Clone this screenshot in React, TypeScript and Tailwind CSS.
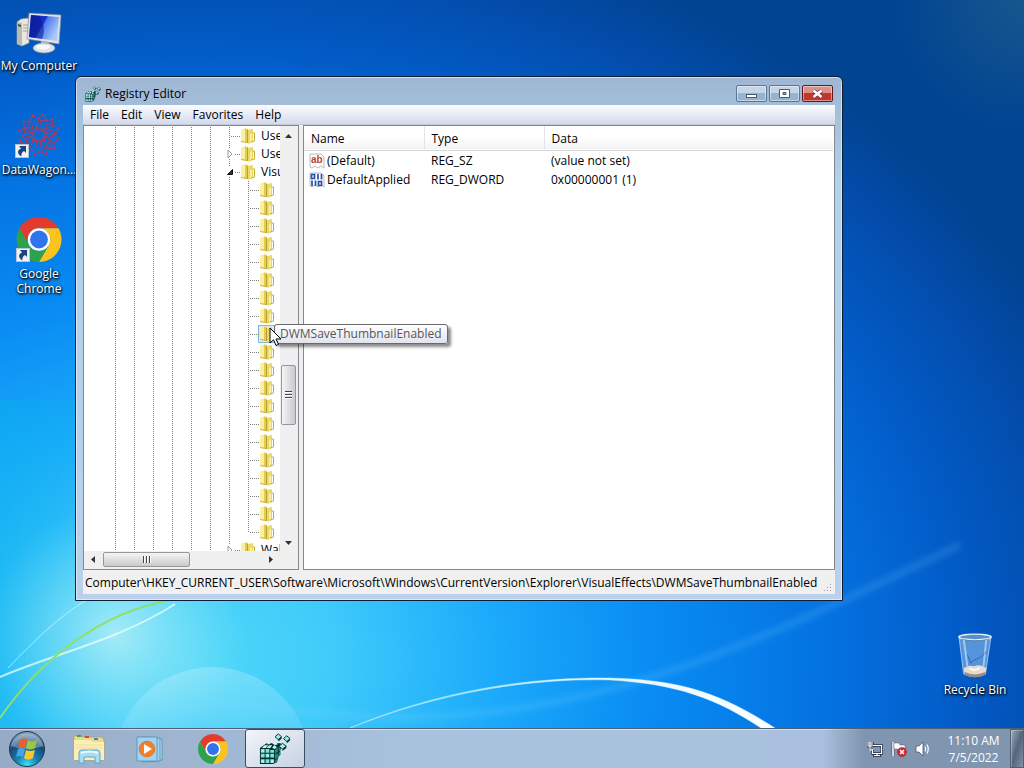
import React from 'react'

const menus = ['File', 'Edit', 'View', 'Favorites', 'Help']

const values = [
  { name: '(Default)', type: 'REG_SZ', data: '(value not set)', kind: 'text' },
  { name: 'DefaultApplied', type: 'REG_DWORD', data: '0x00000001 (1)', kind: 'binary' },
]

type Node = { label: string; leaf?: boolean; arrow?: 'open' | 'closed'; selected?: boolean; last?: boolean }

const leaves: Node[] = Array.from({ length: 20 }, (_, i) => ({
  label: '',
  leaf: true,
  selected: i === 8,
  last: i === 19,
}))

const nodes: Node[] = [
  { label: 'User' },
  { label: 'UserAssist', arrow: 'closed' },
  { label: 'VisualEffects', arrow: 'open' },
  ...leaves,
  { label: 'Wallpapers', arrow: 'closed' },
]

const Wallpaper = () => (
  <svg className="absolute inset-0 h-full w-full" viewBox="0 0 1024 768" preserveAspectRatio="none" aria-hidden="true">
    <defs>
      <radialGradient id="sky" gradientUnits="userSpaceOnUse" cx="0" cy="0" r="1" gradientTransform="translate(190 660) scale(960 760)">
        <stop offset="0" stopColor="#52d8f8" />
        <stop offset="0.15" stopColor="#3fcbfa" />
        <stop offset="0.32" stopColor="#1caafb" />
        <stop offset="0.48" stopColor="#098cf3" />
        <stop offset="0.66" stopColor="#0473e2" />
        <stop offset="0.8" stopColor="#025cc8" />
        <stop offset="0.92" stopColor="#034cab" />
        <stop offset="1" stopColor="#014492" />
      </radialGradient>
      <radialGradient id="glow" gradientUnits="userSpaceOnUse" cx="115" cy="635" r="130">
        <stop offset="0" stopColor="#c4f4f6" stopOpacity="0.75" />
        <stop offset="1" stopColor="#8de8f7" stopOpacity="0" />
      </radialGradient>
      <linearGradient id="edge" x1="0" y1="0" x2="1" y2="0">
        <stop offset="0" stopColor="#05b4ea" stopOpacity="0.4" />
        <stop offset="0.12" stopColor="#05b4ea" stopOpacity="0" />
      </linearGradient>
      <linearGradient id="bubble" x1="0" y1="0" x2="0" y2="1">
        <stop offset="0" stopColor="#fff" stopOpacity="0.22" />
        <stop offset="0.6" stopColor="#fff" stopOpacity="0" />
      </linearGradient>
      <linearGradient id="arc" x1="0" y1="0" x2="1" y2="0">
        <stop offset="0" stopColor="#9fe6ff" stopOpacity="0.5" />
        <stop offset="0.5" stopColor="#d9f6ff" />
        <stop offset="1" stopColor="#fff" />
      </linearGradient>
      <radialGradient id="corner" gradientUnits="userSpaceOnUse" cx="1024" cy="0" r="130">
        <stop offset="0" stopColor="#3f7a82" stopOpacity="0.35" />
        <stop offset="1" stopColor="#3f7a82" stopOpacity="0" />
      </radialGradient>
      <filter id="soft"><feGaussianBlur stdDeviation="3" /></filter>
    </defs>
    <rect width="1024" height="768" fill="url(#sky)" />
    <rect y="400" width="1024" height="368" fill="url(#edge)" />
    <rect width="1024" height="768" fill="url(#glow)" />
    <rect width="1024" height="768" fill="url(#corner)" />
    <circle cx="212" cy="765" r="98" fill="url(#bubble)" />
    <path d="M0 677 C50 655 120 640 175 604" fill="none" stroke="#e9fdff" strokeOpacity="0.75" strokeWidth="2" />
    <path d="M8 668 C35 640 60 615 90 598" fill="none" stroke="#e9fdff" strokeOpacity="0.6" strokeWidth="1" />
    <path d="M0 718 C40 660 100 612 172 600" fill="none" stroke="#8fdf6a" strokeWidth="2" />
    <path d="M118 728 C210 690 290 715 380 717 C600 722 760 640 960 545" fill="none" stroke="#7fd4ff" strokeOpacity="0.22" strokeWidth="6" filter="url(#soft)" />
    <path d="M350 728 C440 690 530 677 610 678 C680 680 720 692 778 730 L764 730 C715 697 675 684 610 680 C530 678 440 692 350 728Z" fill="url(#arc)" stroke="#dff7ff" strokeOpacity="0.4" strokeWidth="1" />
  </svg>
)

const ChromeIcon = ({ className }: { className?: string }) => (
  <svg className={className} viewBox="2 2 44 44" aria-hidden="true">
    <path fill="#e33b2e" d="M24 13H43.05A22 22 0 0 0 4.95 13L14.47 29.5A11 11 0 0 1 24 13Z" />
    <path fill="#fcc31e" d="M43.05 13H24A11 11 0 0 1 33.53 29.5L24 46A22 22 0 0 0 43.05 13Z" />
    <path fill="#2da14c" d="M33.53 29.5A11 11 0 0 1 14.47 29.5L4.95 13A22 22 0 0 0 24 46Z" />
    <circle cx="24" cy="24" r="11" fill="#fff" />
    <circle cx="24" cy="24" r="8.7" fill="#2f74ea" />
  </svg>
)

const ComputerIcon = () => (
  <svg className="h-[44px] w-[48px]" viewBox="0 0 48 44" aria-hidden="true">
    <defs>
      <linearGradient id="screen" x1="0" y1="0" x2="1" y2="0.5">
        <stop offset="0" stopColor="#1226a8" />
        <stop offset="0.5" stopColor="#1731c8" />
        <stop offset="0.55" stopColor="#4f7cf0" />
        <stop offset="1" stopColor="#a9c8fb" />
      </linearGradient>
    </defs>
    <path d="M2 12L6 9L14 8V33L7 36L2 34Z" fill="#e9e7e0" stroke="#8f938f" strokeWidth="0.7" />
    <path d="M2 12L7 13V36L2 34Z" fill="#b9bab2" />
    <path d="M3 14L6 15V17L3 16Z" fill="#41484a" />
    <path d="M8 15H13M8 18H13M8 21H13" stroke="#a0a398" />
    <path d="M26 29L34 31L33 38H26Z" fill="#c9ccd0" />
    <ellipse cx="29" cy="38" rx="11" ry="5" fill="#dfe2e6" stroke="#8d959e" strokeWidth="0.6" />
    <ellipse cx="28" cy="37" rx="7" ry="2.500" fill="#f8f9fa" />
    <path d="M14 3L46 5L44 34L12 29Z" fill="#dfe4ea" stroke="#848c98" strokeWidth="0.7" />
    <path d="M16 5L44 7L42 31L14 27Z" fill="url(#screen)" />
    <path d="M24 6C30 14 30 22 27 29L14 27L16 5Z" fill="#0a1790" opacity="0.55" />
  </svg>
)

const WagonIcon = () => (
  <svg className="h-[44px] w-[46px]" viewBox="-23 -22 46 44" aria-hidden="true">
    <g fill="none" stroke="#b03a5c" strokeWidth="0.9">
      {[0, 30, 60, 90, 120, 150, 180, 210, 240, 270, 300, 330].map((a) => (
        <g key={a} transform={`rotate(${a})`}>
          <path d="M0 -6L8 -14L4 -20M0 -6L-6 -13L4 -20" />
          <circle cx="4" cy="-20" r="0.8" fill="#d84452" />
          <path d="M-3 -5L3 -8" />
        </g>
      ))}
      <circle r="5" strokeDasharray="2 1" />
    </g>
  </svg>
)

const ShortcutArrow = () => (
  <svg className="absolute bottom-0 left-0 h-[14px] w-[14px]" viewBox="0 0 14 14" aria-hidden="true">
    <rect x="0.5" y="0.5" width="13" height="13" fill="#eef3f8" stroke="#b8c4d0" />
    <path d="M4 2H11V9L9 7C7 8 6 10 6.500 12.500C2 10 2 6 6 4.500Z" fill="#1d4480" />
  </svg>
)

const BinIcon = () => (
  <svg className="h-[46px] w-[36px]" viewBox="0 0 38 48" aria-hidden="true">
    <path d="M2 4L7 44Q19 50 30 44L36 4Z" fill="#b7dcfa" fillOpacity="0.45" stroke="#c9e5fa" strokeOpacity="0.7" />
    <path d="M7 7L11 36M31 7L28 36" stroke="#e7f5ff" strokeOpacity="0.55" strokeWidth="2" />
    <path d="M31 20C26 28 21 27 14 32M11 24L15 33" stroke="#2453a8" strokeOpacity="0.7" fill="none" />
    <path d="M7 38Q12 34 18 36Q25 33 31 38L30 44Q19 49 8 44Z" fill="#e4dcd2" />
    <path d="M8 42Q19 47 30 42V45Q19 50 8 45Z" fill="#9a8b85" />
    <path d="M13 38L18 40L24 38" stroke="#f9f5ef" fill="none" strokeWidth="2" />
    <ellipse cx="19" cy="5" rx="17" ry="3" fill="#5a8fc8" stroke="#e5f1fa" strokeWidth="1.5" />
    <path d="M4 7Q19 11 34 7" stroke="#35557a" strokeOpacity="0.6" fill="none" />
  </svg>
)

const RegeditIcon = ({ className }: { className?: string }) => (
  <svg className={className} viewBox="0 0 34 34" aria-hidden="true">
    <path d="M1 16L8 11H23L24 14L19 31L15 33H1Z" fill="#052f30" />
    <g fill="#7fe0d6">
      <path d="M2 17H6V21H2ZM7 17H11V21H7ZM12 18H16V21H12ZM2 22H6V26H2ZM7 22H11V26H7ZM12 22H16V26H12ZM2 28H6V32H2ZM7 28H11V32H7ZM12 28H16V32H12Z" />
    </g>
    <g fill="#c9fbf5">
      <path d="M3 16L6 13H10L7 16ZM8 16L11 13H14L12 16ZM8 12L10 10H13L11 12ZM14 16L16 13L19 15L17 17ZM14 11L17 9L20 12L17 13Z" />
      <path d="M3 18H5V20H3ZM8 23H10V25H8ZM3 29H5V31H3ZM13 29H15V31H13Z" />
    </g>
    <g fill="#1f8d8a">
      <path d="M17 18L20 15V20L17 22ZM17 23L20 21V26L17 28ZM17 29L20 27V29L17 32ZM21 15L23 13V18L21 20ZM21 21L23 19V23L21 25Z" />
    </g>
    <g fill="#9af0e8" stroke="#042c2e">
      <path d="M17 4L20.500 1L24 4L20.500 7Z" />
      <path d="M26 6L29.500 3L33 6L29.500 9Z" />
      <path d="M21 14L25 11L29 14L25 17Z" />
    </g>
    <path d="M20.500 7L24 4V6L20.500 9ZM29.500 9L33 6V8L29.500 11ZM25 17L29 14V16L25 19Z" fill="#042c2e" />
  </svg>
)

const FolderIcon = () => (
  <svg className="h-4 w-4 shrink-0" viewBox="0 0 16 16" aria-hidden="true">
    <path d="M1 2L6 0L8 1V15L1 14Z" fill="#f1e47c" />
    <path d="M1 2L5 1V13L1 14Z" fill="#f9f0a4" />
    <path d="M5 1L8 1V15L5 14Z" fill="#e2cd52" />
    <path d="M8 2L13 1V14L8 16Z" fill="#ead968" />
    <path d="M7.500 2V15" stroke="#b99f34" />
    <path d="M10 6L12 5V13L10 14Z" fill="#f8efa6" />
    <path d="M12.500 5H14.500V13L11 14" fill="none" stroke="#c4ad3c" />
    <path d="M1 13.500L7 14.500" stroke="#cdb845" />
  </svg>
)

const ValueIcon = ({ kind }: { kind: string }) => (
  <svg className="h-4 w-4 shrink-0" viewBox="0 0 16 16" aria-hidden="true">
    <path d="M1 1H12L15 4V15L12 13L9 15L6 13L3 15L1 14Z" fill="#fff" stroke="#b4bac4" />
    {kind === 'text' ? (
      <text x="2" y="10" fontSize="10" fontWeight="bold" fill="#c8402a" fontFamily="Liberation Sans, sans-serif">ab</text>
    ) : (
      <g fill="none" stroke="#2450a4" strokeWidth="1.700">
        <path d="M2.500 2.500H5.500V6.500H2.500ZM9 2V7.500M12.500 2V7.500M3 8.500V14M6.500 8.500V14M9.500 9.500H12.500V13.500H9.500Z" />
      </g>
    )}
  </svg>
)

const DesktopIcon = ({ label, children }: { label: string; children: React.ReactNode }) => (
  <a href="#" className="flex w-20 flex-col items-center text-center leading-[15px] text-white [text-shadow:1px_1px_2px_#000,0_1px_3px_#000]">
    {children}
    <span className="mt-1">{label}</span>
  </a>
)

const VLine = ({ half }: { half?: boolean }) => (
  <span className={`w-px shrink-0 self-start bg-[repeating-linear-gradient(#808080_0_1px,transparent_1px_2px)] ${half ? 'h-[9px]' : 'h-[18px]'}`} />
)

const TreeRow = ({ node }: { node: Node }) => (
  <li className="flex h-[18px] items-center pl-[31px]">
    {[0, 1, 2, 3, 4, 5].map((i) => (
      <span key={i} className="flex w-[19px] shrink-0"><VLine /></span>
    ))}
    {node.leaf && <span className="flex w-[19px] shrink-0"><VLine /></span>}
    <span className="relative flex w-[11px] shrink-0 items-center self-stretch">
      <VLine half={node.last} />
      <span className="h-px flex-1 bg-[repeating-linear-gradient(90deg,transparent_0_1px,#808080_1px_2px)]" />
      {node.arrow && (
        <svg className="absolute top-1 -left-1 h-[10px] w-[10px] bg-white" viewBox="0 0 10 10" aria-hidden="true">
          {node.arrow === 'open' ? <path d="M7.500 2.500V7.500H2.500Z" fill="#333" stroke="#111" /> : <path d="M3 1L7 5L3 9Z" fill="#fff" stroke="#999" />}
        </svg>
      )}
    </span>
    <span className={node.selected ? 'bg-[#d9effb] outline outline-[#7cb8e0]' : ''}><FolderIcon /></span>
    <span className="ml-[5px] whitespace-nowrap">{node.label}</span>
  </li>
)

const Arrow = ({ d }: { d: string }) => (
  <svg className="h-[17px] w-[17px] shrink-0" viewBox="0 0 17 17" aria-hidden="true"><path d={d} fill="#333" /></svg>
)

const TreePane = () => (
  <div className="flex w-[216px] shrink-0 flex-col border border-[#828790] bg-white">
    <div className="flex min-h-0 flex-1">
      <ul className="min-w-0 flex-1 overflow-hidden pt-px">
        {nodes.map((node, i) => <TreeRow key={i} node={node} />)}
      </ul>
      <div className="flex w-[18px] flex-col items-center bg-[#f0f0f0] pr-[2px]">
        <Arrow d="M5 12L8.500 8L12 12Z" />
        <div className="flex-[222]" />
        <div className="flex h-[60px] w-[15px] flex-col items-center justify-center gap-px rounded-[2px] border border-[#979797] bg-linear-to-r from-[#f5f5f5] to-[#c9cacf]">
          {[0, 1, 2].map((i) => <span key={i} className="h-[2px] w-[7px] border-t border-[#444] bg-white" />)}
        </div>
        <div className="flex-[109]" />
        <Arrow d="M5 7L8.500 11L12 7Z" />
      </div>
    </div>
    <div className="flex h-[18px] items-center bg-[#f0f0f0] pr-[19px] pb-[2px]">
      <Arrow d="M11 5L7 8.500L11 12Z" />
      <div className="ml-[2px] flex h-[15px] w-[87px] items-center justify-center gap-px rounded-[2px] border border-[#979797] bg-linear-to-b from-[#f5f5f5] to-[#c9cacf]">
        {[0, 1, 2].map((i) => <span key={i} className="h-[7px] w-[2px] border-l border-[#444] bg-white" />)}
      </div>
      <div className="flex-1" />
      <Arrow d="M7 5L11 8.500L7 12Z" />
    </div>
  </div>
)

const ValuePane = () => (
  <div className="min-w-0 flex-1 border border-[#828790] bg-white pr-px">
    <table className="w-full table-fixed border-collapse text-left">
      <thead>
        <tr className="h-6 border-b border-[#d5d5d5] bg-linear-to-b from-white from-50% to-[#f3f3f3]">
          <th className="w-[120px] border-r border-[#e0e3e8] pt-[2px] pl-[7px] font-normal">Name</th>
          <th className="w-[120px] border-r border-[#e0e3e8] pt-[2px] pl-[7px] font-normal">Type</th>
          <th className="pt-[2px] pl-[7px] font-normal">Data</th>
        </tr>
      </thead>
      <tbody>
        {values.map((v) => (
          <tr key={v.name} className="h-[19px] whitespace-nowrap">
            <td className="pt-[2px] pl-[5px]">
              <span className="flex h-[17px] items-center gap-[2px]"><ValueIcon kind={v.kind} />{v.name}</span>
            </td>
            <td className="pt-[2px] pl-[7px]">{v.type}</td>
            <td className="pt-[2px] pl-[7px]">{v.data}</td>
          </tr>
        ))}
      </tbody>
    </table>
  </div>
)

const captionButton = 'flex h-[17px] w-[31px] items-center justify-center rounded-[2px] border shadow-[inset_0_0_0_1px_rgba(255,255,255,0.45)]'

const RegistryWindow = () => (
  <section className="absolute top-[76px] right-[181px] bottom-[127px] left-[75px] flex flex-col rounded-t-[6px] border border-[#0c1e33] bg-linear-to-b from-[#9fb6d2] via-[#b0d2ea] via-20% to-[#bad0ec] px-[7px] pb-[6px] text-black shadow-[inset_0_0_0_1px_rgba(255,255,255,0.55)]">
    <header className="flex h-[28px] items-center pt-[5px]">
      <RegeditIcon className="mr-1 ml-[2px] h-4 w-4" />
      <h1 className="flex-1">Registry Editor</h1>
      <div className="flex gap-[2px] pr-[2px]">
        <button aria-label="Minimize" className={`${captionButton} border-[#5a7795] bg-linear-to-b from-[#c3d5e8] from-50% to-[#98b3d0] to-50%`}>
          <svg className="h-[13px] w-[13px]" viewBox="0 0 13 13"><rect x="1.5" y="7.5" width="10" height="3" fill="#fff" stroke="#4a5a70" /></svg>
        </button>
        <button aria-label="Maximize" className={`${captionButton} border-[#5a7795] bg-linear-to-b from-[#c3d5e8] from-50% to-[#98b3d0] to-50%`}>
          <svg className="h-[13px] w-[13px]" viewBox="0 0 13 13"><path d="M1.500 2.500H11.500V10.500H1.500ZM5 5.500V7.500H8V5.500Z" fillRule="evenodd" fill="#fff" stroke="#4a5a70" /></svg>
        </button>
        <button aria-label="Close" className={`${captionButton} border-[#5c1a1e] bg-linear-to-b from-[#dd9188] from-50% to-[#c0382c] to-50%`}>
          <svg className="h-[13px] w-[13px]" viewBox="0 0 13 13">
            <path d="M2.500 3.500L10.500 10M10.500 3.500L2.500 10" stroke="#5a3a44" strokeWidth="4" />
            <path d="M2.500 3.500L10.500 10M10.500 3.500L2.500 10" stroke="#fff" strokeWidth="2.600" />
          </svg>
        </button>
      </div>
    </header>
    <nav className="flex h-[20px] border-b border-[#c3cbdb] bg-linear-to-b from-[#fbfcfe] to-[#d4daec] pl-px">
      {menus.map((m) => <button key={m} className="px-[6px]">{m}</button>)}
    </nav>
    <div className="flex min-h-0 flex-1 gap-1 bg-[#f0f0f0]">
      <TreePane />
      <ValuePane />
    </div>
    <footer className="flex h-[24px] items-center justify-between bg-[#f0f0f0] pt-px pl-[2px] whitespace-nowrap">
      <span>Computer\HKEY_CURRENT_USER\Software\Microsoft\Windows\CurrentVersion\Explorer\VisualEffects\DWMSaveThumbnailEnabled</span>
      <svg className="mr-[2px] h-3 w-3 self-end" viewBox="0 0 12 12" aria-hidden="true">
        <path d="M9 2h1v1h-1zM9 5h1v1h-1zM9 8h1v1h-1zM6 5h1v1h-1zM6 8h1v1h-1zM3 8h1v1h-1z" fill="#a9959b" />
      </svg>
    </footer>
    <div role="tooltip" className="absolute top-[247px] left-[198px] flex h-[20px] items-center rounded-[3px] border border-[#6a6a6a] bg-linear-to-b from-white to-[#e2e3ee] px-[5px] text-[#575757] shadow-[3px_3px_3px_rgba(0,0,0,0.45)]">
      DWMSaveThumbnailEnabled
    </div>
    <svg className="absolute top-[250px] left-[193px] h-[20px] w-[13px]" viewBox="0 0 13 20" aria-hidden="true">
      <path d="M1 1V16L4.500 12.800L7 18.500L9.500 17.400L7 12H12Z" fill="#fff" stroke="#000" />
    </svg>
  </section>
)

const StartOrb = () => (
  <svg className="h-[38px] w-[38px]" viewBox="0 0 38 38" aria-hidden="true">
    <defs>
      <radialGradient id="orb" cx="0.5" cy="0.95" r="0.9">
        <stop offset="0" stopColor="#3fe0f5" />
        <stop offset="0.35" stopColor="#1680b4" />
        <stop offset="0.7" stopColor="#174a78" />
        <stop offset="1" stopColor="#7d9cba" />
      </radialGradient>
    </defs>
    <circle cx="19" cy="19" r="17.500" fill="url(#orb)" stroke="#20384f" />
    <path d="M3 16A16.500 16.500 0 0 1 35 16Q19 22 3 16Z" fill="#fff" fillOpacity="0.3" />
    <path d="M12 10Q16 7 19 9L17 18Q13 16 10 18Z" fill="#e8602c" />
    <path d="M20 10Q24 13 29 10L27 18Q22 21 18 18Z" fill="#9bc93e" />
    <path d="M10 19Q13 17 17 19L15 27Q11 25 8 27Z" fill="#49a4e4" />
    <path d="M18 20Q22 22 27 20L25 28Q20 31 16 28Z" fill="#fcc62f" />
  </svg>
)

const ExplorerIcon = () => (
  <svg className="h-[32px] w-[34px]" viewBox="0 0 34 32" aria-hidden="true">
    <path d="M2 3L8 2L10 4H30L32 7V27H2Z" fill="#eed98a" stroke="#b89c4a" strokeWidth="0.7" />
    <path d="M5 2H9V4H5Z" fill="#3fa548" /><path d="M13 3H17V5H13Z" fill="#d2483a" /><path d="M22 5H26V7H22Z" fill="#3c86d8" />
    <path d="M2 7H19L21 9H32V27H2Z" fill="#fbefb5" />
    <path d="M4 12H30M4 15H30" stroke="#f0dd95" />
    <path d="M7 30V20Q7 17 10 17H25Q28 17 28 20V30H23V24H12V30Z" fill="#a9ddf5" stroke="#5ba6cf" />
    <path d="M9 20Q17 17 26 20" stroke="#e8faff" fill="none" strokeWidth="2" />
  </svg>
)

const PlayerIcon = () => (
  <svg className="h-[28px] w-[30px]" viewBox="0 0 30 28" aria-hidden="true">
    <path d="M10 3L26 4V25L10 26Z" fill="#b9dcf0" stroke="#4d8db8" strokeWidth="0.8" />
    <path d="M6 2L24 3V26L6 27Z" fill="#a2d1ee" stroke="#4d8db8" strokeWidth="0.8" />
    <path d="M1 2H21V26H1Z" fill="#a6d2ee" stroke="#4a90c0" strokeWidth="0.8" />
    <circle cx="11" cy="14" r="7.800" fill="#f0812a" stroke="#d9701f" strokeWidth="0.800" />
    <path d="M8 9L16 14L8 19Z" fill="#fff" />
  </svg>
)

const taskButton = 'flex w-[60px] items-center justify-center'

const Taskbar = () => (
  <footer className="relative flex h-10 border-t border-[#4a6178] bg-linear-to-r from-[#97abc6] from-0% via-[#a8c2de] via-40% to-[#a8c0dd] text-white shadow-[inset_0_1px_0_rgba(255,255,255,0.5)]">
    <button aria-label="Start" className="mr-[6px] flex w-[53px] items-center justify-center"><StartOrb /></button>
    <div className="flex flex-1 gap-[2px]">
      <button aria-label="Windows Explorer" className={taskButton}><ExplorerIcon /></button>
      <button aria-label="Windows Media Player" className={taskButton}><PlayerIcon /></button>
      <button aria-label="Google Chrome" className={taskButton}><ChromeIcon className="h-[30px] w-[30px]" /></button>
      <button aria-label="Registry Editor" className={`${taskButton} rounded-[3px] border border-[#3c4d60] bg-linear-to-br from-[#f2f5fa] to-[#c6d2e2]`}>
        <RegeditIcon className="h-8 w-8" />
      </button>
    </div>
    <div className="flex items-center bg-linear-to-r from-transparent to-[#8095b0] to-20% pl-[44px]">
      <div className="flex gap-2">
        <svg className="h-4 w-4" viewBox="0 0 16 16" role="img" aria-label="Network">
          <path d="M5.500 4.500H14.500V12.500H5.500V9M10 12V14M6 14.500H14" fill="none" stroke="#22303f" strokeWidth="2.600" />
          <path d="M0.500 1V5H5.500V1M3 5V9" fill="none" stroke="#22303f" strokeWidth="2.400" />
          <path d="M6 4.500H14.500V12.500H5.500V9H3V5M10 12V14M7 14.500H13" fill="none" stroke="#fff" strokeWidth="1.200" />
          <path d="M1 1V5H5V1M3 1V5" fill="none" stroke="#fff" strokeWidth="1.100" />
        </svg>
        <svg className="h-4 w-4" viewBox="0 0 16 16" role="img" aria-label="Action Center">
          <path d="M2 1V15" stroke="#3b4a5c" strokeWidth="2.800" />
          <path d="M2 1V15" stroke="#fff" strokeWidth="1.600" />
          <path d="M3 2H8L9 4H14V10H8L7 8H3Z" fill="#fff" stroke="#4a5a6c" strokeWidth="0.500" />
          <circle cx="11" cy="11" r="4.500" fill="#d8262c" stroke="#8c1216" strokeWidth="0.500" />
          <path d="M9 9L13 13M13 9L9 13" stroke="#fff" strokeWidth="1.500" />
        </svg>
        <svg className="h-4 w-4" viewBox="0 0 16 16" role="img" aria-label="Volume">
          <path d="M1 5H4L8 1V15L4 11H1Z" fill="#fff" stroke="#3b4a5c" strokeWidth="0.700" />
          <path d="M10 5.500Q11.500 8 10 10.500M12 3.500Q14.500 8 12 12.500" fill="none" stroke="#fff" strokeWidth="1.200" />
        </svg>
      </div>
      <div className="w-[79px] pt-px pl-[6px] text-center leading-[17px]">
        <div>11:10 AM</div>
        <div>7/5/2022</div>
      </div>
      <button aria-label="Show desktop" className="h-full w-[14px] border border-[#4f6072] bg-linear-to-br from-[#a0adbb] via-[#53667a] to-[#8493a6] shadow-[inset_1px_1px_0_rgba(255,255,255,0.3)]" />
    </div>
  </footer>
)

export default function App() {
  return (
    <div className="relative flex h-screen flex-col overflow-hidden font-['Open_Sans','Noto_Sans',sans-serif] text-[12px] leading-4">
      <Wallpaper />
      <main className="relative flex min-h-0 flex-1 justify-between">
        <div className="-ml-px flex flex-col gap-10 pt-[10px]">
          <DesktopIcon label="My Computer"><ComputerIcon /></DesktopIcon>
          <DesktopIcon label="DataWagon...">
            <span className="relative px-px pb-px"><WagonIcon /><ShortcutArrow /></span>
          </DesktopIcon>
          <DesktopIcon label="Google Chrome">
            <span className="relative"><ChromeIcon className="h-[45px] w-[46px]" /><ShortcutArrow /></span>
          </DesktopIcon>
        </div>
        <div className="flex items-end pr-[9px] pb-[31px]">
          <DesktopIcon label="Recycle Bin"><BinIcon /></DesktopIcon>
        </div>
        <RegistryWindow />
      </main>
      <Taskbar />
    </div>
  )
}
